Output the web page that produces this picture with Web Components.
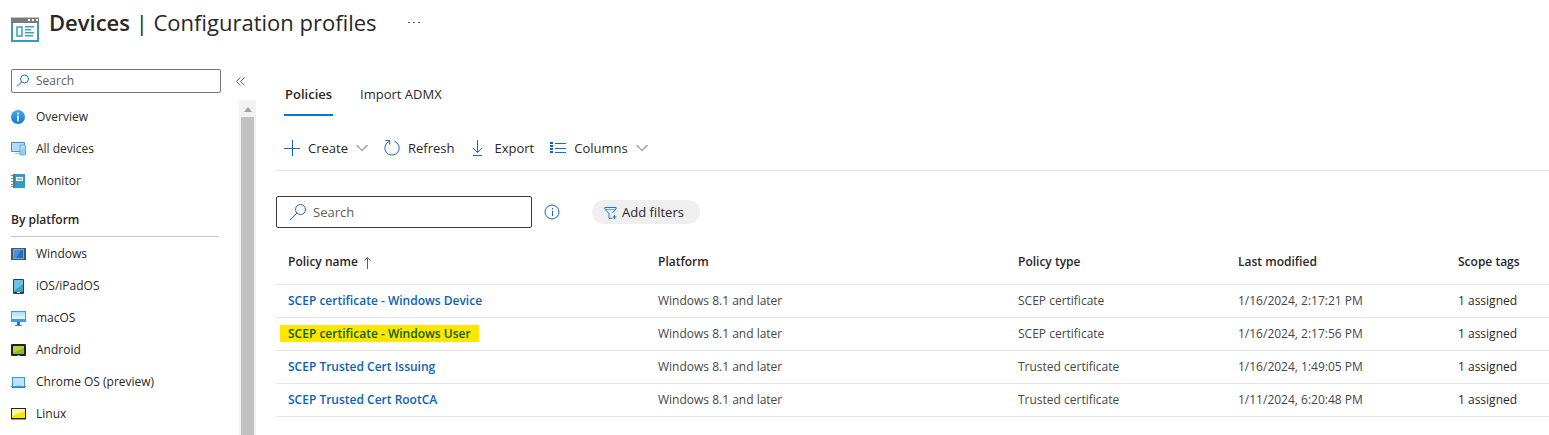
<!DOCTYPE html>
<html lang="en">
<head>
<meta charset="utf-8">
<title>Devices | Configuration profiles</title>
<style>
  body {
    margin: 0;
    background: #fff;
    color: #292827;
    font-family: "Open Sans", "Noto Sans", sans-serif;
    font-size: 12px;
    line-height: 16px;
  }
</style>
</head>
<body>
<portal-page>
  <blade-header slot="header" heading="Devices" subheading="Configuration profiles"></blade-header>
  <side-nav slot="nav">
    <nav-item icon="overview">Overview</nav-item>
    <nav-item icon="devices">All devices</nav-item>
    <nav-item icon="monitor">Monitor</nav-item>
    <nav-heading>By platform</nav-heading>
    <nav-item icon="windows">Windows</nav-item>
    <nav-item icon="ios">iOS/iPadOS</nav-item>
    <nav-item icon="macos">macOS</nav-item>
    <nav-item icon="android">Android</nav-item>
    <nav-item icon="chromeos">Chrome OS (preview)</nav-item>
    <nav-item icon="linux">Linux</nav-item>
  </side-nav>
  <tab-bar></tab-bar>
  <command-bar>
    <command-button icon="plus" menu>Create</command-button>
    <command-button icon="refresh">Refresh</command-button>
    <command-button icon="export">Export</command-button>
    <command-button icon="columns" menu>Columns</command-button>
  </command-bar>
  <filter-bar></filter-bar>
  <policy-table></policy-table>
</portal-page>

<script>
/**
 * Creates a template from a string of markup.
 *
 * @param {string} html The markup.
 * @returns {HTMLTemplateElement} The template.
 */
function createTemplate (html) {
  const template = document.createElement('template')
  template.innerHTML = html
  return template
}

const icons = {
  blade: [28, 26, `<path fill="#c4c4c4" d="M0 0h28v2H0z"/><path fill="#7a7a7a" d="M0 1h28v5H0z"/><path fill="#fff" d="M17 2h2v2h-2zM21 2h2v2h-2zM25 2h2v2h-2z"/>
    <path fill="none" stroke="#3999c6" stroke-width="2" d="M1 6v18h26V6"/><path fill="none" stroke="#3999c6" stroke-width="1.5" d="M6 10h5v9H6z"/>
    <path fill="#3fa0cc" d="M14 9h9v1.5h-9zM14 12h6v1.5h-6zM14 15h9v1.5h-9zM14 18h8v1.5h-8z"/>`],
  dots: [14, 4, '<path fill="#555" d="M1 2h2v1H1zM6 2h2v1H6zM11 2h2v1h-2z"/>'],
  search: [14, 14, '<g fill="none" stroke="#0f6cd0"><circle cx="8.5" cy="5" r="4"/><path d="M5.5 8 1 12.5"/></g>'],
  searchLarge: [18, 18, '<g fill="none" stroke="#1666cc"><circle cx="11.5" cy="6.5" r="5"/><path d="M8 10 1 17"/></g>'],
  collapse: [10, 9, '<path fill="none" stroke="#666" d="M4.5.5l-4 4 4 4M8.5.5l-4 4 4 4"/>'],
  overview: [15, 15, `<defs><linearGradient id="o" x2="0" y2="1"><stop stop-color="#4aa8f0"/><stop offset="1" stop-color="#0f78d4"/></linearGradient></defs>
    <circle cx="7" cy="7" r="7" fill="url(#o)"/><circle cx="7" cy="3.5" r="1" fill="#fff"/><path fill="#fff" d="M6.2 5.5h1.6v6H6.2z"/>`],
  devices: [15, 15, `<path fill="#b4dcf7" stroke="#3b8fd8" d="M.5.5h13v9H.5z"/><path fill="#8fc8f2" d="M4 11h5v1H4z"/>
    <path fill="#b9defa" stroke="#4c9de0" stroke-width=".8" d="M9 3h5.5v10H9z"/><path fill="#78b8ee" d="M9 9l5-4v8H9z" opacity=".5"/>`],
  monitor: [15, 15, `<path fill="#3999c6" d="M2 0h12v14H2z"/><path fill="#2b7fa8" d="M2 0h2v14H2z"/><path fill="#fff" d="M5 3h7v4H5z"/><path fill="#8cc5dd" d="M6 4h5v2H6z"/>
    <path fill="#888" d="M0 1h3v1H0zM0 4h3v1H0zM0 7h3v1H0zM0 10h3v1H0zM0 12h3v1H0z"/>`],
  windows: [15, 15, '<path fill="#4d545c" d="M0 1h15v12H0z"/><path fill="#69a8e6" d="M2 2h11v10H2z"/><path fill="#1d6fc0" d="M3 3h9v8H3z"/><path fill="#4b91d6" d="M3 3h7l-5 8H3z"/>'],
  ios: [15, 15, '<rect x="2" width="11" height="15" rx="1" fill="#2f3b45"/><path fill="#3aa3ca" d="M3 1h9v12H3z"/><path fill="#6cc4e2" d="M3 1h9v4l-9 7z"/><path fill="#fff" d="M6 13h3v1H6z"/>'],
  macos: [15, 15, `<defs><linearGradient id="m" x2="0" y2="1"><stop stop-color="#a9ddfb"/><stop offset="1" stop-color="#e8f7ff"/></linearGradient></defs>
    <path fill="#3f9be4" d="M0 0h15v11H0z"/><path fill="url(#m)" d="M1 1h13v7H1z"/><path fill="#1b72c4" d="M6 11h3v3H6z"/><path fill="#2b86d6" d="M4 14h7v1H4z"/>`],
  android: [15, 15, '<rect y="1" width="15" height="12" rx="1" fill="#222"/><path fill="#86b83a" d="M2 3h11v8H2z"/><path fill="#b8d432" d="M2 3h11v2L2 10z"/><path fill="#888" d="M6 12h3v1H6z"/>'],
  chromeos: [15, 15, '<path fill="#3d94dc" d="M1 2h13v10H1z"/><path fill="#bfe3fa" d="M2 3h11v8H2z"/><path fill="#9fd1f5" d="M5 10h5v1H5z"/><path fill="#4a9be2" d="M0 11h15v1H0z"/><path fill="#2a7fcc" d="M1 12h13v1H1z"/>'],
  linux: [15, 15, '<path fill="#222" d="M0 1h15v11H0z"/><path fill="#fde100" d="M1 2h13v9H1z"/><path fill="#fff6a8" d="M1 2h13v2L1 9z"/><path fill="#999" d="M0 12h15v1H0z"/>'],
  plus: [16, 16, '<path stroke="#1768c8" d="M8.5 0v16M0 8.5h16"/>'],
  refresh: [16, 16, '<g fill="none" stroke="#1768c8"><path d="M10.5 1.2a7.2 7.2 0 1 1-5 0"/><path d="M1.5.6h4.2v4"/></g>'],
  export: [16, 16, '<path fill="none" stroke="#1768c8" d="M7.5 0v12.5M3 8l4.5 4.5L12 8M3 15.5h9"/>'],
  columns: [16, 12, '<path stroke="#0f6cd0" d="M5 1.5h11M5 6.5h11M5 10.5h11"/><path stroke="#0f5fb8" stroke-width="3" stroke-dasharray="2 1" d="M1.5 0v12"/>'],
  chevron: [12, 8, '<path fill="none" stroke="#555" d="m.5 1 5.5 5.5L11.5 1"/>'],
  info: [16, 16, '<circle cx="8" cy="8" r="7" fill="none" stroke="#1666c8"/><path stroke="#1666c8" d="M8.5 7v5M8.5 4v1.5"/>'],
  filter: [13, 13, '<path fill="none" stroke="#1478d4" d="M8.5 7 12 3V1.5H.8V3L5 7.5v4.8h3"/><path fill="none" stroke="#63aee8" d="M2 3.5h9"/><path stroke="#1478d4" d="M10.5 9v4M8.5 11h4"/>'],
  sort: [7, 12, '<path fill="none" stroke="#66557a" d="M3.5 12V1M.5 3.5l3-3 3 3"/>']
}

customElements.define('ui-icon',
  /**
   * Draws one of the icons, chosen by the name attribute.
   */
  class extends HTMLElement {
    /**
     * Creates an instance and attaches a shadow DOM.
     */
    constructor () {
      super()
      this.attachShadow({ mode: 'open' })
    }

    /**
     * Called when the element is connected to the DOM.
     */
    connectedCallback () {
      const [width, height, shapes] = icons[this.getAttribute('name')]
      this.shadowRoot.innerHTML = `
        <style>
          :host { display: inline-flex; flex: none; }
          svg { display: block; }
        </style>
        <svg width="${width}" height="${height}" viewBox="0 0 ${width} ${height}" aria-hidden="true">${shapes}</svg>
      `
    }
  })

const pageTemplate = createTemplate(`
  <style>
    :host {
      display: flex;
      flex-direction: column;
      min-height: 100vh;
    }
    .body {
      display: flex;
      flex: 1;
      gap: 20px;
    }
    main {
      flex: 1;
      min-width: 0;
      padding-top: 10px;
    }
  </style>
  <slot name="header"></slot>
  <div class="body">
    <slot name="nav"></slot>
    <main><slot></slot></main>
  </div>
`)

customElements.define('portal-page', class extends HTMLElement {
  constructor () {
    super()
    this.attachShadow({ mode: 'open' })
    this.shadowRoot.appendChild(pageTemplate.content.cloneNode(true))
  }
})

const headerTemplate = createTemplate(`
  <style>
    :host {
      display: block;
      padding: 6px 11px 16px;
    }
    header {
      display: flex;
      align-items: flex-start;
    }
    ui-icon { margin: 11px 10px 0 0; }
    h1 {
      margin: 0;
      font-size: 22px;
      line-height: 32px;
      font-weight: 400;
    }
    b { font-weight: 600; }
    button {
      display: flex;
      margin-left: 30px;
      padding: 14px 0;
      border: 0;
      background: none;
    }
    button ui-icon { margin: 0; }
  </style>
  <header>
    <ui-icon name="blade"></ui-icon>
    <h1><b></b> | <span></span></h1>
    <button type="button" aria-label="More"><ui-icon name="dots"></ui-icon></button>
  </header>
`)

customElements.define('blade-header', class extends HTMLElement {
  constructor () {
    super()
    this.attachShadow({ mode: 'open' })
    this.shadowRoot.appendChild(headerTemplate.content.cloneNode(true))
  }

  /**
   * Called when the element is connected to the DOM.
   */
  connectedCallback () {
    this.shadowRoot.querySelector('b').textContent = this.getAttribute('heading')
    this.shadowRoot.querySelector('h1 span').textContent = this.getAttribute('subheading')
  }
})

customElements.define('search-box',
  /**
   * A text box with a magnifier before it.
   */
  class extends HTMLElement {
    constructor () {
      super()
      this.attachShadow({ mode: 'open' })
    }

    /**
     * Called when the element is connected to the DOM.
     */
    connectedCallback () {
      const large = this.hasAttribute('large')
      this.shadowRoot.innerHTML = `
        <style>
          :host {
            display: flex;
            box-sizing: border-box;
            align-items: center;
            gap: 6px;
            height: 24px;
            padding-left: 4px;
            border: 1px solid #767574;
            border-radius: 2px;
          }
          :host([large]) {
            height: 32px;
            padding-left: 12px;
            border-color: #3b3a39;
            font-size: 13px;
          }
          input {
            flex: 1;
            min-width: 0;
            padding: 0;
            border: 0;
            outline: 0;
            background: none;
            color: inherit;
            font: inherit;
          }
          input::placeholder { color: #605e5c; }
        </style>
        <ui-icon name="${large ? 'searchLarge' : 'search'}"></ui-icon>
        <input type="text" placeholder="Search" aria-label="Search">
      `
    }
  })

const navTemplate = createTemplate(`
  <style>
    :host {
      display: flex;
      flex-direction: column;
      flex: none;
      width: 256px;
      padding-top: 10px;
    }
    .top {
      display: flex;
      align-items: center;
      gap: 15px;
      padding-left: 11px;
    }
    search-box { width: 210px; }
    .top button {
      display: flex;
      padding: 0;
      border: 0;
      background: none;
    }
    .scroller {
      display: flex;
      flex: 1;
      justify-content: space-between;
      margin-top: 7px;
    }
    nav {
      width: 208px;
      padding: 1px 0 0 11px;
    }
    .bar {
      display: flex;
      flex-direction: column;
      width: 17px;
      background: #f1f1f1;
    }
    .arrow {
      align-self: center;
      margin: 7px 0 5px;
      border: 4px solid transparent;
      border-top: 0;
      border-bottom: 5px solid #a0a0a0;
    }
    .thumb {
      flex: 1;
      margin: 0 2px;
      background: #c1c1c1;
    }
  </style>
  <div class="top">
    <search-box></search-box>
    <button type="button" aria-label="Collapse menu"><ui-icon name="collapse"></ui-icon></button>
  </div>
  <div class="scroller">
    <nav><slot></slot></nav>
    <div class="bar"><div class="arrow"></div><div class="thumb"></div></div>
  </div>
`)

customElements.define('side-nav', class extends HTMLElement {
  constructor () {
    super()
    this.attachShadow({ mode: 'open' })
    this.shadowRoot.appendChild(navTemplate.content.cloneNode(true))
  }
})

customElements.define('nav-item', class extends HTMLElement {
  constructor () {
    super()
    this.attachShadow({ mode: 'open' })
  }

  /**
   * Called when the element is connected to the DOM.
   */
  connectedCallback () {
    this.shadowRoot.innerHTML = `
      <style>
        :host { display: block; }
        a {
          display: flex;
          align-items: center;
          gap: 10px;
          height: 32px;
          color: inherit;
          text-decoration: none;
        }
      </style>
      <a href="#"><ui-icon name="${this.getAttribute('icon')}"></ui-icon><span><slot></slot></span></a>
    `
  }
})

const navHeadingTemplate = createTemplate(`
  <style>
    :host {
      display: block;
      margin-bottom: 1px;
      padding: 15px 0 8px;
      border-bottom: 1px solid #c8c6c4;
    }
    h2 {
      margin: 0;
      font-size: 12px;
      line-height: 16px;
      font-weight: 600;
    }
  </style>
  <h2><slot></slot></h2>
`)

customElements.define('nav-heading', class extends HTMLElement {
  constructor () {
    super()
    this.attachShadow({ mode: 'open' })
    this.shadowRoot.appendChild(navHeadingTemplate.content.cloneNode(true))
  }
})

const tabTemplate = createTemplate(`
  <style>
    :host {
      display: flex;
      gap: 26px;
      padding-left: 8px;
      font-size: 13px;
    }
    button {
      padding: 17px 1px 12px;
      border: 0;
      border-bottom: 2px solid transparent;
      background: none;
      color: inherit;
      font: inherit;
    }
    .active {
      border-color: #0078d4;
      font-weight: 600;
    }
  </style>
  <button type="button" class="active">Policies</button>
  <button type="button">Import ADMX</button>
`)

customElements.define('tab-bar', class extends HTMLElement {
  constructor () {
    super()
    this.attachShadow({ mode: 'open' })
    this.shadowRoot.appendChild(tabTemplate.content.cloneNode(true))
  }
})

const commandBarTemplate = createTemplate(`
  <style>
    :host {
      display: flex;
      gap: 16px;
      padding: 20px 8px 10px;
      border-bottom: 1px solid #e6e6e6;
      font-size: 13px;
    }
  </style>
  <slot></slot>
`)

customElements.define('command-bar', class extends HTMLElement {
  constructor () {
    super()
    this.attachShadow({ mode: 'open' })
    this.shadowRoot.appendChild(commandBarTemplate.content.cloneNode(true))
  }
})

customElements.define('command-button', class extends HTMLElement {
  constructor () {
    super()
    this.attachShadow({ mode: 'open' })
  }

  /**
   * Called when the element is connected to the DOM.
   */
  connectedCallback () {
    this.shadowRoot.innerHTML = `
      <style>
        :host { display: block; }
        button {
          display: flex;
          align-items: center;
          gap: 8px;
          height: 24px;
          padding: 0;
          border: 0;
          background: none;
          color: inherit;
          font: inherit;
        }
      </style>
      <button type="button">
        <ui-icon name="${this.getAttribute('icon')}"></ui-icon>
        <span><slot></slot></span>
        ${this.hasAttribute('menu') ? '<ui-icon name="chevron"></ui-icon>' : ''}
      </button>
    `
  }
})

const filterTemplate = createTemplate(`
  <style>
    :host {
      display: flex;
      align-items: center;
      padding: 25px 0 12px;
    }
    search-box { width: 256px; }
    .info {
      display: flex;
      margin: 0 32px 0 12px;
      padding: 0;
      border: 0;
      background: none;
    }
    .pill {
      display: flex;
      align-items: center;
      gap: 5px;
      height: 24px;
      padding: 0 16px 0 12px;
      border: 0;
      border-radius: 12px;
      background: #efefef;
      color: inherit;
      font: inherit;
      font-size: 13px;
    }
  </style>
  <search-box large></search-box>
  <button type="button" class="info" aria-label="Search help"><ui-icon name="info"></ui-icon></button>
  <button type="button" class="pill"><ui-icon name="filter"></ui-icon><span>Add filters</span></button>
`)

customElements.define('filter-bar', class extends HTMLElement {
  constructor () {
    super()
    this.attachShadow({ mode: 'open' })
    this.shadowRoot.appendChild(filterTemplate.content.cloneNode(true))
  }
})

const policies = [
  { name: 'SCEP certificate - Windows Device', type: 'SCEP certificate', modified: '1/16/2024, 2:17:21 PM' },
  { name: 'SCEP certificate - Windows User', type: 'SCEP certificate', modified: '1/16/2024, 2:17:56 PM', marked: true },
  { name: 'SCEP Trusted Cert Issuing', type: 'Trusted certificate', modified: '1/16/2024, 1:49:05 PM' },
  { name: 'SCEP Trusted Cert RootCA', type: 'Trusted certificate', modified: '1/11/2024, 6:20:48 PM' }
]

const tableTemplate = createTemplate(`
  <style>
    :host { display: block; }
    table {
      width: 100%;
      table-layout: fixed;
      border-collapse: separate;
      border-spacing: 0;
    }
    .name { width: 370px; }
    .platform { width: 360px; }
    .type, .modified { width: 220px; }
    th, td {
      box-sizing: border-box;
      height: 33px;
      padding: 0 0 0 12px;
      border-bottom: 1px solid #e6e6e6;
      text-align: left;
      white-space: nowrap;
    }
    th {
      height: 45px;
      font-weight: 600;
    }
    td { color: #484644; }
    td:last-child { color: #292827; }
    ui-icon { margin-left: 6px; vertical-align: middle; }
    a {
      color: #0a62b8;
      font-weight: 600;
      text-decoration: none;
    }
    .marked {
      margin-left: -8px;
      padding: 0 8px;
      background: #ffe600;
      color: #0a6210;
    }
  </style>
  <table>
    <colgroup><col class="name"><col class="platform"><col class="type"><col class="modified"><col></colgroup>
    <thead>
      <tr>
        <th scope="col">Policy name<ui-icon name="sort"></ui-icon></th>
        <th scope="col">Platform</th>
        <th scope="col">Policy type</th>
        <th scope="col">Last modified</th>
        <th scope="col">Scope tags</th>
      </tr>
    </thead>
    <tbody></tbody>
  </table>
`)

customElements.define('policy-table', class extends HTMLElement {
  constructor () {
    super()
    this.attachShadow({ mode: 'open' })
    this.shadowRoot.appendChild(tableTemplate.content.cloneNode(true))
  }

  /**
   * Called when the element is connected to the DOM.
   */
  connectedCallback () {
    this.shadowRoot.querySelector('tbody').innerHTML = policies.map((policy) => `
      <tr>
        <td><a href="#"${policy.marked ? ' class="marked"' : ''}>${policy.name}</a></td>
        <td>Windows 8.1 and later</td>
        <td>${policy.type}</td>
        <td>${policy.modified}</td>
        <td>1 assigned</td>
      </tr>
    `).join('')
  }
})
</script>
</body>
</html>
